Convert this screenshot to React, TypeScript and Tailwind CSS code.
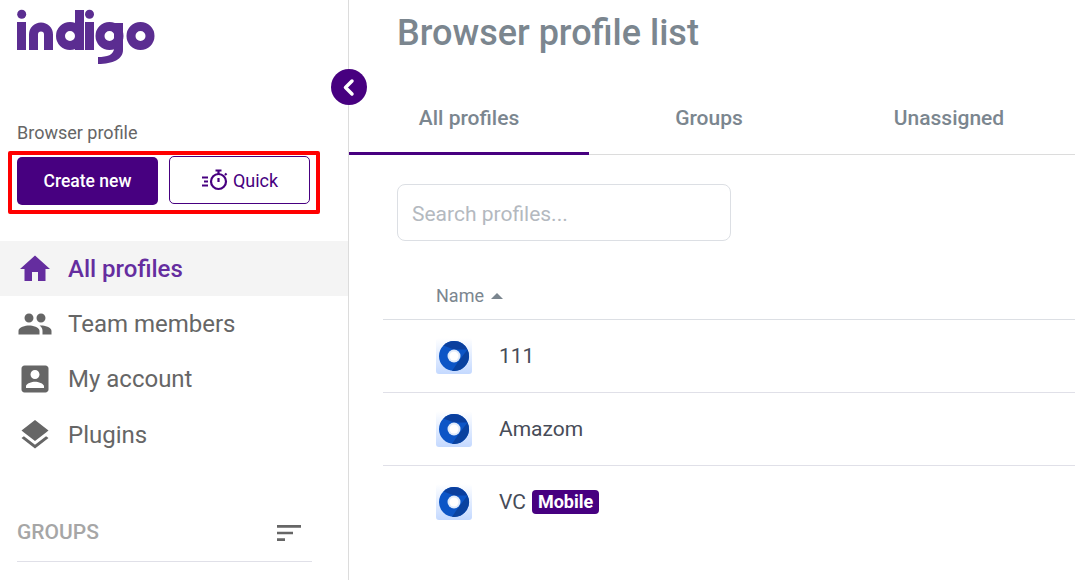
const HOME = "M10 20v-6h4v6h5v-8h3L12 3 2 12h3v8z";
const PEOPLE =
  "M16 11c1.66 0 2.99-1.34 2.99-3S17.66 5 16 5c-1.66 0-3 1.34-3 3s1.34 3 3 3zm-8 0c1.66 0 2.99-1.34 2.99-3S9.66 5 8 5C6.34 5 5 6.34 5 8s1.34 3 3 3zm0 2c-2.33 0-7 1.17-7 3.5V19h14v-2.5c0-2.33-4.67-3.5-7-3.5zm8 0c-.29 0-.62.02-.97.05 1.16.84 1.97 1.97 1.97 3.45V19h6v-2.5c0-2.33-4.67-3.5-7-3.5z";
const ACCOUNT =
  "M3 5v14c0 1.1.89 2 2 2h14c1.1 0 2-.9 2-2V5c0-1.1-.9-2-2-2H5c-1.11 0-2 .9-2 2zm12 4c0 1.66-1.34 3-3 3s-3-1.34-3-3 1.34-3 3-3 3 1.34 3 3zm-9 8c0-2 4-3.1 6-3.1s6 1.1 6 3.1v1H6v-1z";
const LAYERS =
  "M11.99 18.54l-7.37-5.73L3 14.07l9 7 9-7-1.63-1.27-7.38 5.74zM12 16l7.36-5.73L21 9l-9-7-9 7 1.63 1.27L12 16z";

const nav = [
  { label: "All profiles", icon: HOME, active: true },
  { label: "Team members", icon: PEOPLE, active: false },
  { label: "My account", icon: ACCOUNT, active: false },
  { label: "Plugins", icon: LAYERS, active: false },
];

const profiles = [
  { name: "111", mobile: false },
  { name: "Amazom", mobile: false },
  { name: "VC", mobile: true },
];

function Logo() {
  return (
    <svg width="140" height="56" viewBox="0 0 140 56" fill="none" className="block">
      <g stroke="#5b2d91" strokeWidth="9">
        <circle cx="4.7" cy="6.3" r="4.5" fill="#5b2d91" stroke="none" />
        <path d="M4.5 14v28" />
        <path d="M16.5 42V26.5a7.5 7.5 0 0 1 15 0V42" />
        <circle cx="53" cy="28" r="9.5" />
        <path d="M62.5 2v40" />
        <circle cx="72.5" cy="6.3" r="4.5" fill="#5b2d91" stroke="none" />
        <path d="M72.5 14v28" />
        <circle cx="92.5" cy="28" r="9.5" />
        <circle cx="123.5" cy="28" r="9.5" />
      </g>
      <path d="M97 15h9v27c0 9-10 14-25 14v-7c9 0 16-2 16-9z" fill="#5b2d91" />
    </svg>
  );
}

function BrowserIcon() {
  return (
    <svg width="36" height="36" viewBox="0 0 36 36" className="block">
      <defs>
        <linearGradient id="tile" x1="0" y1="0" x2="0" y2="1">
          <stop offset="0" stopColor="#ffffff" />
          <stop offset="1" stopColor="#c4d9ff" />
        </linearGradient>
      </defs>
      <rect width="36" height="36" rx="3" fill="url(#tile)" />
      <circle cx="18" cy="18" r="15" fill="#0c55c6" />
      <path d="M18 3a15 15 0 0 1 13.5 8.5L18 11.5 7.5 7.5A15 15 0 0 1 18 3z" fill="#0a3f9e" />
      <path d="M31.5 11.5A15 15 0 0 1 16 32.9l6-9z" fill="#0a429f" />
      <circle cx="18" cy="18" r="6.5" fill="#dfeafa" />
      <circle cx="18" cy="18" r="4.5" fill="#ffffff" />
    </svg>
  );
}

export default function App() {
  return (
    <div className="relative flex h-[580px] w-[1075px] overflow-hidden bg-white font-['Roboto',sans-serif]">
      <aside className="w-[349px] shrink-0 border-r border-[#dcdcdc]">
        <div className="pl-[17px] pt-[8px]">
          <Logo />
        </div>
        <p className="mt-[57px] pl-[17px] text-[18px] leading-[24px] text-[#666666]">Browser profile</p>
        <div className="ml-[8px] mt-[6px] flex h-[63px] w-[312px] items-start gap-[11px] rounded-[2px] border-[4px] border-[#ff0000] pl-[5px] pt-[1px]">
          <button className="mt-[1px] h-[48px] w-[141px] rounded-[5px] bg-[#470080] text-[17.5px] font-medium text-white">
            Create new
          </button>
          <button className="flex h-[48px] w-[141px] items-center justify-center gap-[4px] rounded-[5px] border border-[#470080] text-[18px] text-[#470080]">
            <svg width="28" height="24" viewBox="0 0 28 24" fill="none" stroke="#470080" strokeWidth="2.2">
              <circle cx="17.5" cy="13.5" r="7.5" />
              <path d="M14.5 2.5h6M17.5 3v3M17.5 10v4M24 5.5l1.5 1.5M1 9.5h6M3 13.5h4M1 17.5h6" />
            </svg>
            Quick
          </button>
        </div>
        <nav className="mt-[27px]">
          {nav.map((item) => (
            <div
              key={item.label}
              className={`flex h-[55.3px] items-center gap-[15px] pl-[17px] text-[24px] ${
                item.active ? "bg-[#f4f4f4] font-medium text-[#652d9f]" : "text-[#666666]"
              }`}
            >
              <svg width="36" height="36" viewBox="0 0 24 24" fill="currentColor">
                <path d={item.icon} />
              </svg>
              {item.label}
            </div>
          ))}
        </nav>
        <div className="ml-[17px] mt-[47px] flex h-[53px] w-[295px] items-center justify-between border-b border-[#e0e0e8] pb-[5px] pr-[7px]">
          <span className="text-[21px] font-medium text-[#a6a6a6]">GROUPS</span>
          <svg width="32" height="32" viewBox="0 0 24 24" fill="#666666" className="-scale-y-100">
            <path d="M3 18h18v-2H3v2zM3 6v2h6V6H3zm0 7h12v-2H3v2z" />
          </svg>
        </div>
      </aside>

      <main className="min-w-0 flex-1">
        <h1 className="pl-[48px] pt-[11px] text-[36px] font-medium leading-[45px] text-[#7b868f]">
          Browser profile list
        </h1>
        <div className="mt-[27px] flex h-[72px] border-b border-[#dcdcdc] text-[21px] font-medium text-[#7b868f]">
          <div className="mb-[-1px] flex w-[240px] items-center justify-center border-b-[3px] border-[#470080] pt-[3px]">All profiles</div>
          <div className="flex w-[240px] items-center justify-center">Groups</div>
          <div className="flex w-[240px] items-center justify-center">Unassigned</div>
        </div>
        <div className="ml-[48px] mt-[29px] flex h-[57px] w-[334px] items-center rounded-[8px] border border-[#dcdfe4] pl-[14px] pt-[5px] text-[21px] text-[#b4b9bf]">
          Search profiles...
        </div>
        <div className="ml-[34px]">
          <div className="mt-[32px] flex h-[47px] items-center gap-[7px] border-b border-[#dcdfe4] pb-[2px] pl-[53px] text-[18px] text-[#7b868f]">
            Name
            <span className="mt-[2px] h-0 w-0 border-x-[6px] border-b-[6px] border-x-transparent border-b-[#7b868f]" />
          </div>
          {profiles.map((p) => (
            <div key={p.name} className="flex h-[73px] items-center border-b border-[#e0e0e8] pl-[53px] text-[21px] text-[#474c58] last:border-b-transparent">
              <BrowserIcon />
              <span className="ml-[27px] mt-[2px]">{p.name}</span>
              {p.mobile && (
                <span className="ml-[6px] rounded-[4px] bg-[#470080] px-[6px] text-[18px] font-bold leading-[24px] text-white">
                  Mobile
                </span>
              )}
            </div>
          ))}
        </div>
      </main>

      <button className="absolute left-[331px] top-[69px] flex h-[36px] w-[36px] items-center justify-center rounded-full bg-[#470080]">
        <svg width="18" height="20" viewBox="0 0 18 20" fill="none" stroke="#ffffff" strokeWidth="3.5" strokeLinecap="round" strokeLinejoin="round">
          <path d="M12 4l-6.5 6.5L12 17" />
        </svg>
      </button>
    </div>
  );
}
